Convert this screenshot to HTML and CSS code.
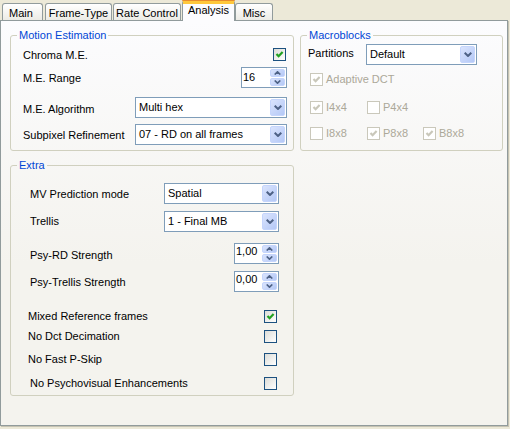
FILE: index.html
```html
<!DOCTYPE html>
<html>
<head>
<meta charset="utf-8">
<title>Analysis</title>
<link rel="stylesheet" href="styles.css">
</head>
<body>
<div class="tabs">
  <div class="tab w-main">Main</div>
  <div class="tab w-frame">Frame-Type</div>
  <div class="tab w-rate">Rate Control</div>
  <div class="tab active w-analysis">Analysis</div>
  <div class="tab w-misc">Misc</div>
</div>
<div class="panel">
  <fieldset class="group">
    <legend>Motion Estimation</legend>
    <div class="inner me">
      <div class="row h17">
        <span class="lbl sh1">Chroma M.E.</span>
        <span class="cb mr1"><svg viewBox="0 0 11 11" width="11" height="11"><polyline points="2.5,5 4.6,7.2 8.6,3" fill="none" stroke="#21A121" stroke-width="2.2"/></svg></span>
      </div>
      <div class="row h21 mt4">
        <span class="lbl sh1">M.E. Range</span>
        <div class="spin w46 tall"><span class="val">16</span><span class="ud"><span class="udb"><svg viewBox="0 0 7 4" width="7" height="4"><path d="M0.7 3.5 L3.5 0.8 L6.3 3.5" fill="none" stroke="#4D6185" stroke-width="1.6"/></svg></span><span class="udb"><svg viewBox="0 0 7 4" width="7" height="4"><path d="M0.7 0.5 L3.5 3.2 L6.3 0.5" fill="none" stroke="#4D6185" stroke-width="1.6"/></svg></span></span></div>
      </div>
      <div class="row h21 mt9">
        <span class="lbl sh2">M.E. Algorithm</span>
        <div class="combo w152"><span class="val">Multi hex</span><span class="btn"><svg viewBox="0 0 8 5" width="8" height="5"><path d="M0.7 0.7 L4 4 L7.3 0.7" fill="none" stroke="#4D6185" stroke-width="2"/></svg></span></div>
      </div>
      <div class="row h21 mt6">
        <span class="lbl sh1">Subpixel Refinement</span>
        <div class="combo w152"><span class="val">07 - RD on all frames</span><span class="btn"><svg viewBox="0 0 8 5" width="8" height="5"><path d="M0.7 0.7 L4 4 L7.3 0.7" fill="none" stroke="#4D6185" stroke-width="2"/></svg></span></div>
      </div>
    </div>
  </fieldset>

  <fieldset class="group">
    <legend>Macroblocks</legend>
    <div class="inner mb">
      <div class="part-row">
        <span class="lbl part-lbl">Partitions</span>
        <div class="combo w111"><span class="val">Default</span><span class="btn"><svg viewBox="0 0 8 5" width="8" height="5"><path d="M0.7 0.7 L4 4 L7.3 0.7" fill="none" stroke="#4D6185" stroke-width="2"/></svg></span></div>
      </div>
      <div class="chk-row mt8">
        <span class="chk"><span class="cb dis"><svg viewBox="0 0 11 11" width="11" height="11"><polyline points="2.5,5 4.6,7.2 8.6,3" fill="none" stroke="#C9C7BA" stroke-width="2.2"/></svg></span><span class="dlbl">Adaptive DCT</span></span>
      </div>
      <div class="chk-grid mt15">
        <span class="chk"><span class="cb dis"><svg viewBox="0 0 11 11" width="11" height="11"><polyline points="2.5,5 4.6,7.2 8.6,3" fill="none" stroke="#C9C7BA" stroke-width="2.2"/></svg></span><span class="dlbl">I4x4</span></span>
        <span class="chk"><span class="cb dis"></span><span class="dlbl">P4x4</span></span>
      </div>
      <div class="chk-grid mt13">
        <span class="chk"><span class="cb dis"></span><span class="dlbl">I8x8</span></span>
        <span class="chk"><span class="cb dis"><svg viewBox="0 0 11 11" width="11" height="11"><polyline points="2.5,5 4.6,7.2 8.6,3" fill="none" stroke="#C9C7BA" stroke-width="2.2"/></svg></span><span class="dlbl">P8x8</span></span>
        <span class="chk"><span class="cb dis"><svg viewBox="0 0 11 11" width="11" height="11"><polyline points="2.5,5 4.6,7.2 8.6,3" fill="none" stroke="#C9C7BA" stroke-width="2.2"/></svg></span><span class="dlbl">B8x8</span></span>
      </div>
    </div>
  </fieldset>

  <fieldset class="group extra">
    <legend>Extra</legend>
    <div class="inner ex">
      <div class="row h21">
        <span class="lbl sh1">MV Prediction mode</span>
        <div class="combo w115"><span class="val">Spatial</span><span class="btn"><svg viewBox="0 0 8 5" width="8" height="5"><path d="M0.7 0.7 L4 4 L7.3 0.7" fill="none" stroke="#4D6185" stroke-width="2"/></svg></span></div>
      </div>
      <div class="row h21 mt7">
        <span class="lbl">Trellis</span>
        <div class="combo w115"><span class="val">1 - Final MB</span><span class="btn"><svg viewBox="0 0 8 5" width="8" height="5"><path d="M0.7 0.7 L4 4 L7.3 0.7" fill="none" stroke="#4D6185" stroke-width="2"/></svg></span></div>
      </div>
      <div class="row h21 mt11">
        <span class="lbl sh2">Psy-RD Strength</span>
        <div class="spin w45"><span class="val">1,00</span><span class="ud"><span class="udb"><svg viewBox="0 0 7 4" width="7" height="4"><path d="M0.7 3.5 L3.5 0.8 L6.3 3.5" fill="none" stroke="#4D6185" stroke-width="1.6"/></svg></span><span class="udb"><svg viewBox="0 0 7 4" width="7" height="4"><path d="M0.7 0.5 L3.5 3.2 L6.3 0.5" fill="none" stroke="#4D6185" stroke-width="1.6"/></svg></span></span></div>
      </div>
      <div class="row h21 mt7">
        <span class="lbl sh1">Psy-Trellis Strength</span>
        <div class="spin w45"><span class="val">0,00</span><span class="ud"><span class="udb"><svg viewBox="0 0 7 4" width="7" height="4"><path d="M0.7 3.5 L3.5 0.8 L6.3 3.5" fill="none" stroke="#4D6185" stroke-width="1.6"/></svg></span><span class="udb"><svg viewBox="0 0 7 4" width="7" height="4"><path d="M0.7 0.5 L3.5 3.2 L6.3 0.5" fill="none" stroke="#4D6185" stroke-width="1.6"/></svg></span></span></div>
      </div>
      <div class="row h13 mt18">
        <span class="lbl cl">Mixed Reference frames</span>
        <span class="cb mr2"><svg viewBox="0 0 11 11" width="11" height="11"><polyline points="2.5,5 4.6,7.2 8.6,3" fill="none" stroke="#21A121" stroke-width="2.2"/></svg></span>
      </div>
      <div class="row h13 mt7">
        <span class="lbl cl">No Dct Decimation</span>
        <span class="cb mr2"></span>
      </div>
      <div class="row h13 mt10">
        <span class="lbl cl">No Fast P-Skip</span>
        <span class="cb mr2"></span>
      </div>
      <div class="row h13 mt11">
        <span class="lbl">No Psychovisual Enhancements</span>
        <span class="cb mr2"></span>
      </div>
    </div>
  </fieldset>
</div>
</body>
</html>
```

FILE: styles.css
```css
* { box-sizing: border-box; }
html, body { margin: 0; padding: 0; }
body {
  width: 510px;
  height: 429px;
  overflow: hidden;
  background: #ECE9D8;
  font-family: "Liberation Sans", Arial, sans-serif;
  font-size: 11px;
  line-height: 13px;
  color: #000;
}

/* tabs */
.tabs {
  display: flex;
  align-items: flex-end;
  height: 20px;
  padding-left: 2px;
  position: relative;
  z-index: 1;
}
.tab {
  height: 17px;
  border: 1px solid #919B9C;
  border-bottom: none;
  border-radius: 3px 3px 0 0;
  background: linear-gradient(#FFFFFF, #ECEBE5);
  display: flex;
  align-items: center;
  justify-content: center;
  padding-top: 2px;
  white-space: nowrap;
}
.tab.active {
  height: 21px;
  margin-bottom: -1px;
  background: #FCFCFE;
  border-top: 3px solid #FFC83C;
  box-shadow: inset 0 1px 0 #FFC83C;
  padding-top: 0;
  padding-bottom: 3px;
  position: relative;
}
.tab.active::before {
  content: "";
  position: absolute;
  left: -1px;
  right: -1px;
  top: -3px;
  height: 1px;
  background: #E68B2C;
  border-radius: 3px 3px 0 0;
}
.w-main { width: 41px; padding-right: 3px; }
.w-frame { width: 67px; margin-left: 2px; }
.w-rate { width: 68px; margin-left: 1px; }
.w-analysis { width: 53px; margin-left: 1px; }
.w-misc { width: 38px; }

/* panel */
.panel {
  width: 508px;
  height: 406px;
  border: 1px solid #919B9C;
  box-shadow: 1px 1px 0 #C5C2B2;
  background: linear-gradient(#FCFCFE, #F4F3EE 60%);
  display: grid;
  grid-template-columns: 284px 203px;
  column-gap: 6px;
  row-gap: 8px;
  align-content: start;
  padding: 8px 4px 0 9px;
}

.group {
  margin: 0;
  padding: 0;
  min-width: 0;
  border: 1px solid #D0D0BF;
  border-radius: 3px;
}
.group legend {
  padding: 0 2px;
  margin-left: 6px;
  line-height: 13px;
  color: #0046D5;
}
.extra { grid-column: 1; }

.inner { display: flex; flex-direction: column; }
.me { padding: 4px 6px 5px 12px; }
.mb { padding: 2px 0 0 7px; }
.ex { padding: 11px 14px 5px 19px; }

.row {
  display: flex;
  align-items: center;
  justify-content: space-between;
}
.h13 { height: 13px; }
.h17 { height: 17px; }
.h21 { height: 21px; }
.mt4 { margin-top: 4px; }
.mt6 { margin-top: 6px; }
.mt7 { margin-top: 7px; }
.mt8 { margin-top: 8px; }
.mt9 { margin-top: 9px; }
.mt10 { margin-top: 10px; }
.mt11 { margin-top: 11px; }
.mt13 { margin-top: 13px; }
.mt15 { margin-top: 15px; }
.mt18 { margin-top: 18px; }
.mr1 { margin-right: 1px; }
.mr2 { margin-right: 2px; }

.lbl { white-space: nowrap; }
.sh1 { padding-top: 2px; }
.sh2 { padding-top: 4px; }
.cl { margin-left: -2px; }

/* checkbox */
.cb {
  width: 13px;
  height: 13px;
  flex: none;
  border: 1px solid #1C5180;
  background: linear-gradient(135deg, #DCDCD7, #FFFFFF);
  display: flex;
  align-items: center;
  justify-content: center;
}
.cb svg { display: block; }
.cb.dis {
  border-color: #CAC8BB;
  background: #FFFFFF;
}
.chk {
  display: flex;
  align-items: center;
  gap: 3px;
  height: 13px;
}
.dlbl { color: #ACA899; white-space: nowrap; }
.chk-row { display: flex; margin-left: 2px; }
.chk-grid {
  display: grid;
  grid-template-columns: 57px 56px auto;
  margin-left: 2px;
}

/* partitions */
.part-row {
  display: flex;
  align-items: center;
  height: 21px;
}
.part-lbl { width: 58px; padding-bottom: 3px; }

/* combo */
.combo {
  height: 21px;
  border: 1px solid #7F9DB9;
  background: #FFFFFF;
  display: flex;
  align-items: center;
  justify-content: space-between;
  padding: 1px 1px 1px 3px;
  flex: none;
}
.combo .val { white-space: nowrap; }
.btn {
  width: 15px;
  height: 17px;
  align-self: stretch;
  border: 1px solid #C5D5FC;
  border-radius: 2px;
  background: linear-gradient(135deg, #DAE4FD, #B4C8F6);
  display: flex;
  align-items: center;
  justify-content: center;
}
.btn svg { display: block; }
.w152 { width: 152px; }
.w111 { width: 111px; }
.w115 { width: 115px; }

/* spinner */
.spin {
  height: 21px;
  border: 1px solid #7F9DB9;
  background: #FFFFFF;
  display: flex;
  justify-content: space-between;
  padding: 1px 1px 1px 1px;
  flex: none;
}
.spin .val { line-height: 13px; padding-top: 0; }
.spin.tall .val { padding-top: 2px; }
.w46 { width: 46px; }
.w45 { width: 45px; }
.ud {
  width: 15px;
  display: flex;
  flex-direction: column;
  gap: 1px;
}
.udb {
  flex: 1;
  border: 1px solid #C5D5FC;
  border-radius: 2px;
  background: linear-gradient(135deg, #DAE4FD, #B4C8F6);
  display: flex;
  align-items: center;
  justify-content: center;
}
.udb svg { display: block; }
```
